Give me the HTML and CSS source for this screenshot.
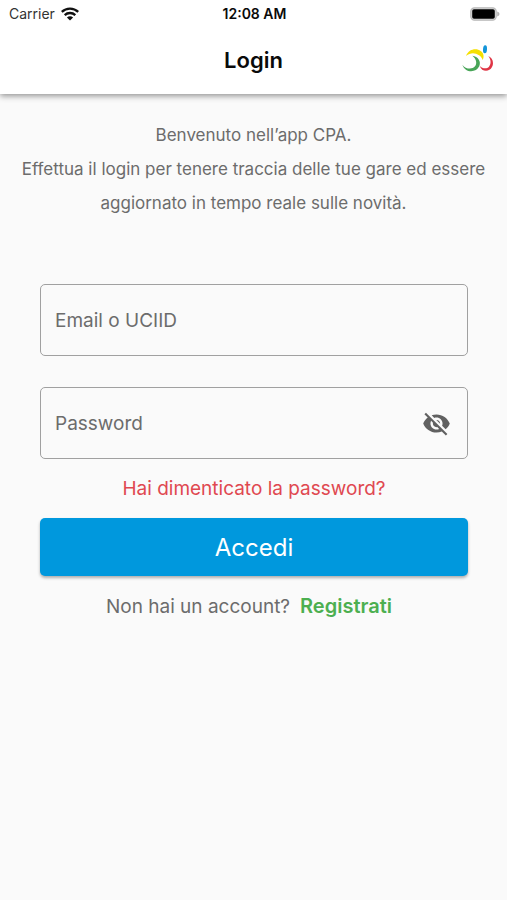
FILE: index.html
```html
<!DOCTYPE html>
<html lang="it">
<head>
<meta charset="utf-8">
<meta name="viewport" content="width=device-width, initial-scale=1">
<title>Login</title>
<link rel="stylesheet" href="styles.css">
</head>
<body>
<header class="top">
  <div class="status">
    <span class="carrier">Carrier
      <svg class="wifi" viewBox="0 0 18 14" aria-hidden="true">
        <g fill="none" stroke="#111" stroke-width="2.3">
          <path d="M.8 4.9C5.4.6 12.600.6 17.200 4.900"/>
          <path d="M3.700 8.100c3-2.800 7.600-2.800 10.600 0"/>
        </g>
        <path fill="#111" d="M5.900 10.400c1.800-1.600 4.400-1.600 6.200 0L9 13.600z"/>
      </svg>
    </span>
    <span class="clock">12:08 AM</span>
    <svg class="battery" viewBox="0 0 30 14" aria-hidden="true">
      <rect x=".8" y=".8" width="25.400" height="12.400" rx="3.600" fill="#ddd" stroke="#b8b8b8" stroke-width="1.200"/>
      <rect x="2.200" y="2.200" width="22.600" height="9.600" rx="1.800" fill="#000"/>
      <path d="M27.200 4.500c3 .8 3 4.200 0 5z" fill="#b4b4b4"/>
    </svg>
  </div>
  <div class="bar">
    <h1 class="title">Login</h1>
    <svg class="logo" viewBox="7 10 93 90" aria-hidden="true">
      <path fill="#f5e000" d="M19 43C27 21 51 19 63 28C72 34 74 45 69 55C67 49 63 44 58 41C46 32 32 32 19 43Z"/>
      <path fill="#48a558" d="M38 42C55 44 65 59 59 73C50 94 17 95 8 69C17 82 37 85 46 74C53 65 50 51 38 42Z"/>
      <path fill="#df3545" d="M86 43C98 48 104 63 97 76C89 92 66 92 60 72C68 81 81 83 88 75C95 66 94 53 86 43Z"/>
      <ellipse cx="76" cy="23" rx="6" ry="12" fill="#1495d9" transform="rotate(4 76 23)"/>
    </svg>
  </div>
</header>
<main class="content">
  <p class="intro">Benvenuto nell’app CPA.<br>Effettua il login per tenere traccia delle tue gare ed essere aggiornato in tempo reale sulle novità.</p>
  <form class="form">
    <div class="field">
      <input class="input" type="text" placeholder="Email o UCIID" aria-label="Email o UCIID">
    </div>
    <div class="field">
      <input class="input" type="password" placeholder="Password" aria-label="Password">
      <button class="toggle" type="button" aria-label="Mostra password">
        <svg viewBox="0 0 24 24" aria-hidden="true"><path fill="#616161" d="M12 7c2.760 0 5 2.240 5 5 0 .65-.13 1.260-.36 1.830l2.920 2.920c1.510-1.260 2.700-2.890 3.430-4.750-1.730-4.390-6-7.500-11-7.500-1.400 0-2.740.25-3.980.7l2.160 2.160C10.740 7.130 11.350 7 12 7zM2 4.270l2.280 2.280.46.46C3.080 8.300 1.780 10.020 1 12c1.730 4.390 6 7.500 11 7.500 1.550 0 3.030-.3 4.380-.84l.42.42L19.730 22 21 20.730 3.270 3 2 4.270zM7.530 9.800l1.550 1.550c-.05.21-.08.43-.08.65 0 1.660 1.340 3 3 3 .22 0 .44-.03.65-.08l1.550 1.550c-.67.33-1.410.53-2.200.53-2.760 0-5-2.240-5-5 0-.79.2-1.530.53-2.200zm4.310-.78l3.150 3.150.02-.16c0-1.660-1.340-3-3-3l-.17.01z"/></svg>
      </button>
    </div>
    <a class="forgot" href="#">Hai dimenticato la password?</a>
    <button class="submit" type="submit">Accedi</button>
    <p class="signup">Non hai un account? <a class="register" href="#">Registrati</a></p>
  </form>
</main>
</body>
</html>
```
FILE: styles.css
```css
* {
  box-sizing: border-box;
}

body {
  margin: 0;
  min-height: 100vh;
  background: #fafafa;
  color: #6c6c6c;
  font-family: Inter, "Liberation Sans", sans-serif;
}

.top {
  background: #fff;
  color: #0a0a0a;
  box-shadow: 0 2px 6px rgba(0, 0, 0, 0.42);
}

.status,
.bar {
  display: grid;
  grid-template-columns: 1fr auto 1fr;
  align-items: center;
}

.status {
  height: 27px;
  padding: 0 7px 0 9px;
  font-size: 14px;
}

.carrier {
  display: flex;
  align-items: center;
  gap: 6px;
  color: #333;
}

.wifi {
  width: 18px;
  height: 14px;
}

.clock {
  font-weight: 600;
}

.battery {
  width: 30px;
  height: 14px;
  justify-self: end;
}

.bar {
  height: 67px;
  padding: 0 14px 2px;
}

.title {
  grid-column: 2;
  margin: 0;
  font-size: 22px;
  font-weight: 600;
  line-height: 28px;
}

.logo {
  justify-self: end;
  width: 31px;
  height: 30px;
}

.content {
  padding: 24px 20px;
}

.intro {
  margin: 0;
  font-size: 17px;
  line-height: 34px;
  text-align: center;
}

.form {
  display: flex;
  flex-direction: column;
  margin: 64px 19px 0 20px;
}

.field {
  position: relative;
  margin-bottom: 31px;
}

.input {
  display: block;
  width: 100%;
  height: 72px;
  padding: 0 14px;
  border: 1px solid #a0a0a0;
  border-radius: 5px;
  background: transparent;
  color: #333;
  font: inherit;
  font-size: 19px;
}

.input::placeholder {
  color: #6c6c6c;
  opacity: 1;
}

.toggle {
  position: absolute;
  top: 0;
  bottom: 0;
  right: 16px;
  width: 32px;
  padding: 0;
  border: 0;
  background: none;
}

.toggle svg {
  display: block;
  width: 29px;
  height: 29px;
  margin: auto;
}

.forgot {
  align-self: center;
  margin-top: -15px;
  color: #e04850;
  font-size: 19px;
  line-height: 28px;
  text-decoration: none;
}

.submit {
  height: 58px;
  margin-top: 15px;
  padding: 0;
  border: 0;
  border-radius: 5px;
  background: #0098dd;
  box-shadow: 0 2px 3px rgba(0, 0, 0, 0.3);
  color: #fff;
  font: inherit;
  font-size: 24px;
}

.signup {
  display: flex;
  justify-content: center;
  align-items: baseline;
  gap: 10px;
  margin: 16px 10px 0 0;
  font-size: 19px;
  line-height: 28px;
}

.register {
  color: #4caf50;
  font-size: 20px;
  font-weight: 600;
  text-decoration: none;
}
```
